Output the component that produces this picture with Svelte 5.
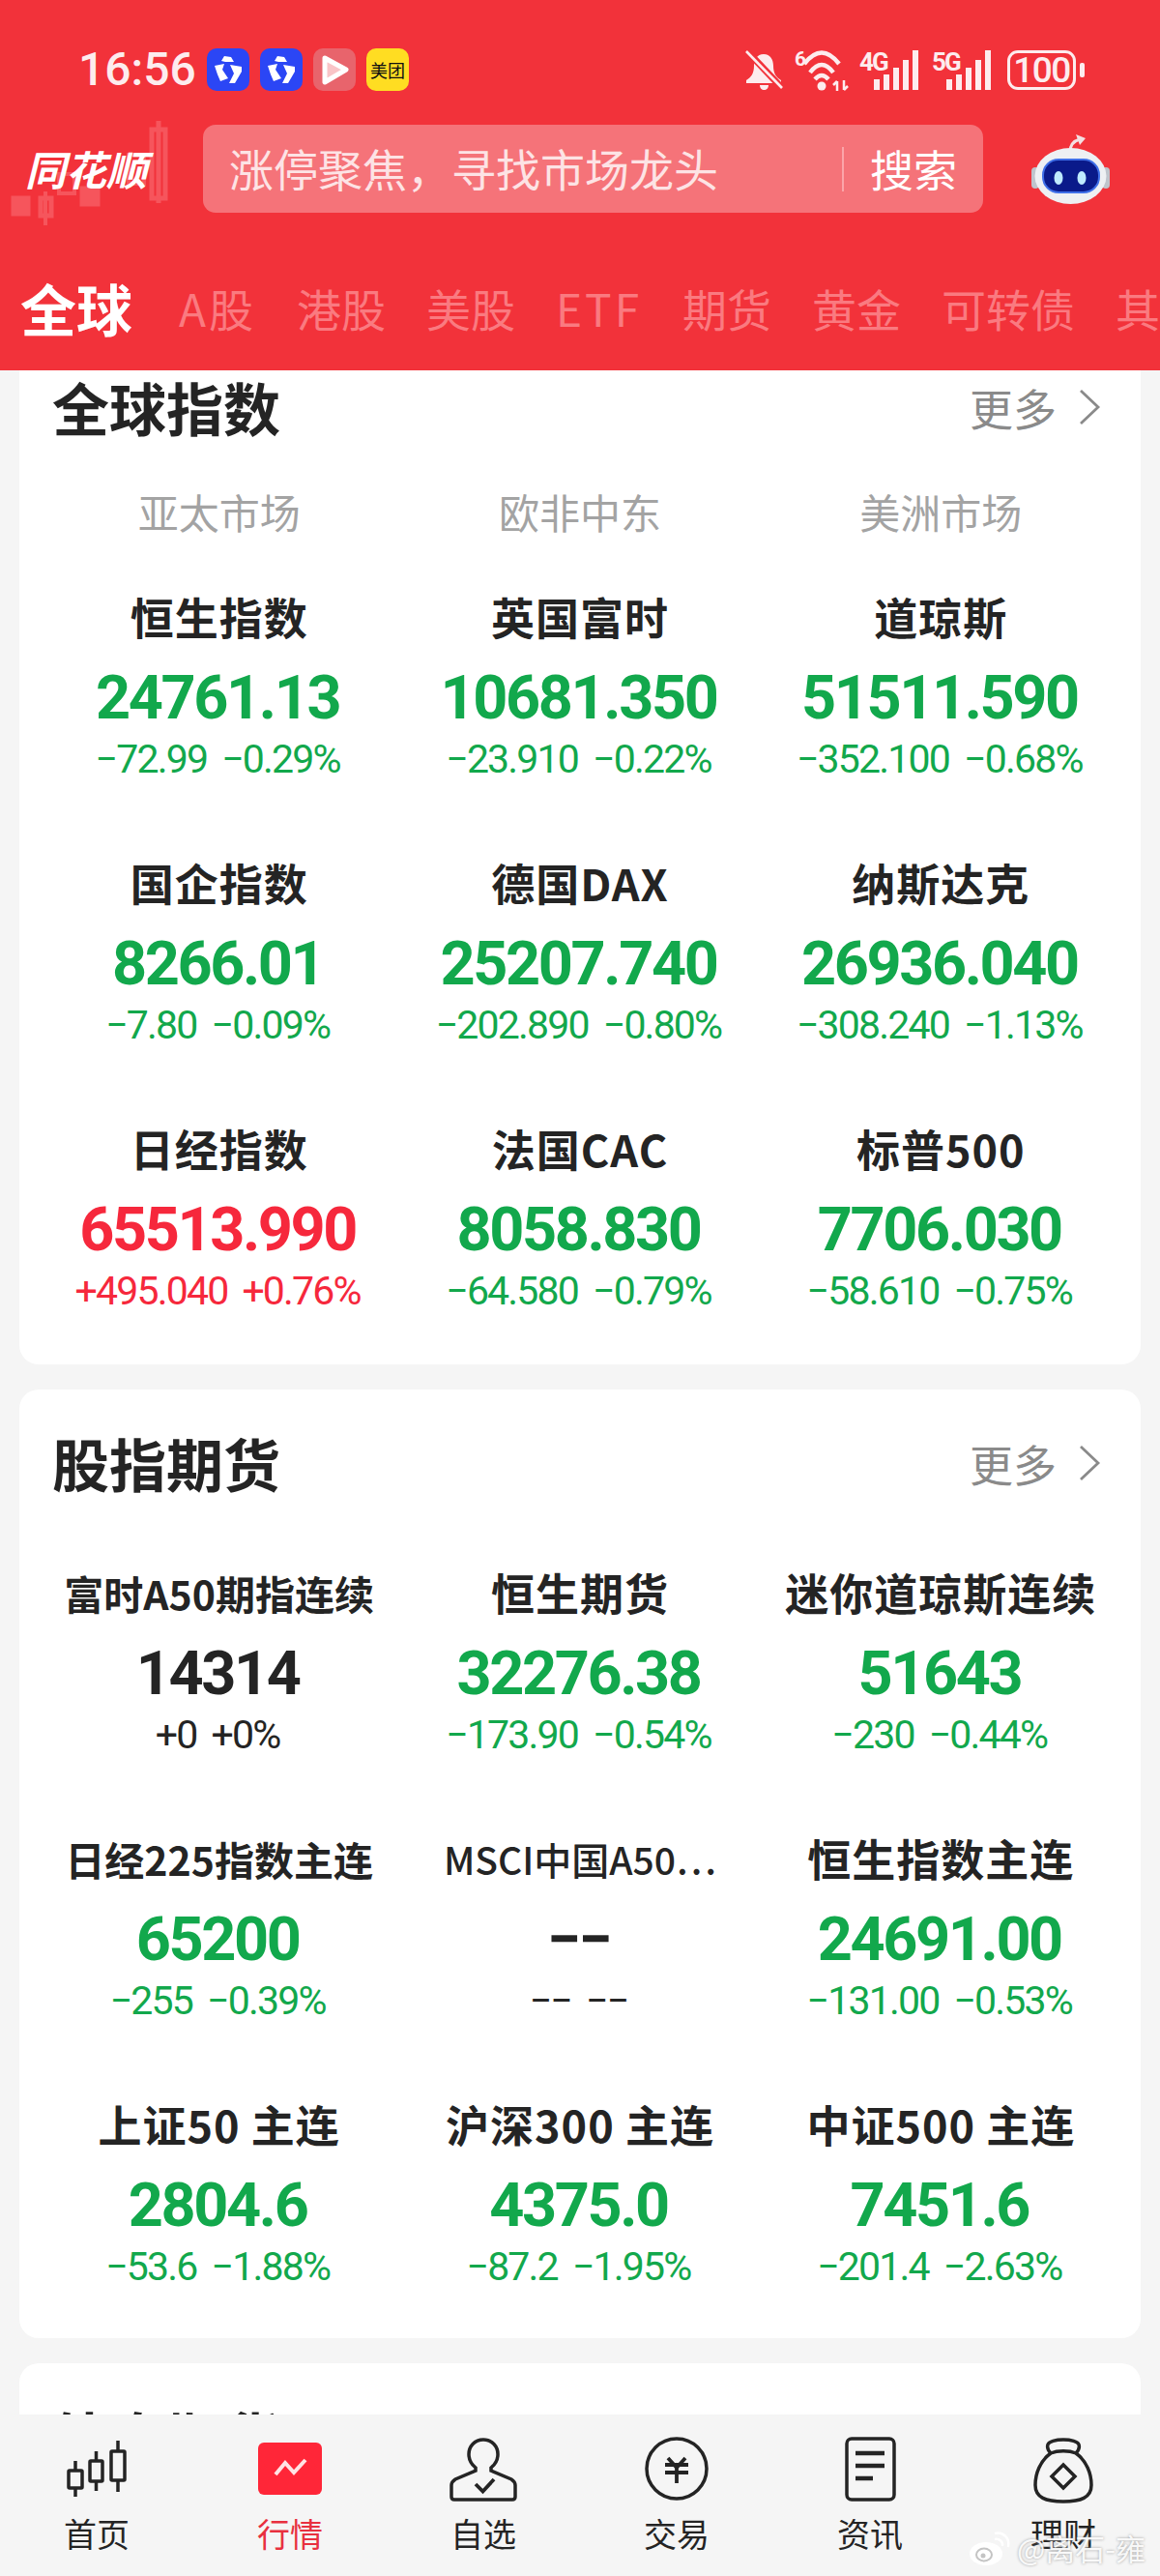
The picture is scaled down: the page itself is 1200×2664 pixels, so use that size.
<script>
  const tabs = ['A股', '港股', '美股', 'ETF', '期货', '黄金', '可转债', '其他']
  const markets = ['亚太市场', '欧非中东', '美洲市场']

  const indices = [
    { name: '恒生指数', value: '24761.13', change: '−72.99', pct: '−0.29%', dir: 'down' },
    { name: '英国富时', value: '10681.350', change: '−23.910', pct: '−0.22%', dir: 'down' },
    { name: '道琼斯', value: '51511.590', change: '−352.100', pct: '−0.68%', dir: 'down' },
    { name: '国企指数', value: '8266.01', change: '−7.80', pct: '−0.09%', dir: 'down' },
    { name: '德国DAX', value: '25207.740', change: '−202.890', pct: '−0.80%', dir: 'down' },
    { name: '纳斯达克', value: '26936.040', change: '−308.240', pct: '−1.13%', dir: 'down' },
    { name: '日经指数', value: '65513.990', change: '+495.040', pct: '+0.76%', dir: 'up' },
    { name: '法国CAC', value: '8058.830', change: '−64.580', pct: '−0.79%', dir: 'down' },
    { name: '标普500', value: '7706.030', change: '−58.610', pct: '−0.75%', dir: 'down' }
  ]

  const futures = [
    { name: '富时A50期指连续', value: '14314', change: '+0', pct: '+0%', dir: 'flat', fit: 'small' },
    { name: '恒生期货', value: '32276.38', change: '−173.90', pct: '−0.54%', dir: 'down' },
    { name: '迷你道琼斯连续', value: '51643', change: '−230', pct: '−0.44%', dir: 'down' },
    { name: '日经225指数主连', value: '65200', change: '−255', pct: '−0.39%', dir: 'down', fit: 'small' },
    { name: 'MSCI中国A50…', value: '−−', change: '−−', pct: '−−', dir: 'flat', fit: 'smaller' },
    { name: '恒生指数主连', value: '24691.00', change: '−131.00', pct: '−0.53%', dir: 'down' },
    { name: '上证50 主连', value: '2804.6', change: '−53.6', pct: '−1.88%', dir: 'down' },
    { name: '沪深300 主连', value: '4375.0', change: '−87.2', pct: '−1.95%', dir: 'down' },
    { name: '中证500 主连', value: '7451.6', change: '−201.4', pct: '−2.63%', dir: 'down' }
  ]

  const bars = [11, 16, 23, 31, 41]
</script>

{#snippet quote(q)}
  <div class="quote">
    <div class="name {q.fit ?? ''}">{q.name}</div>
    <div class="value {q.dir}">{q.value}</div>
    <div class="change {q.dir}"><span>{q.change}</span><span>{q.pct}</span></div>
  </div>
{/snippet}

{#snippet head(title)}
  <div class="card-head">
    <h2>{title}</h2>
    <div class="more">更多
      <svg width="24" height="40" viewBox="0 0 24 40"><path d="M3 3l18 17L3 37" fill="none" stroke="#8a8a8a" stroke-width="2.8"/></svg>
    </div>
  </div>
{/snippet}

{#snippet appIcon()}
  <svg class="app" viewBox="0 0 44 44">
    <rect width="44" height="44" rx="10" fill="#2b46f5"/>
    <polygon points="15,13 18,8 25,9 28,14 19,14" fill="#fff"/>
    <polygon points="8,18 18,16 16,22 22,31 14,34 11,27" fill="#fff"/>
    <polygon points="24,17 36,19 36,24 29,36 23,36 28,26" fill="#fff"/>
  </svg>
{/snippet}

{#snippet signal(gen)}
  <div class="signal">
    <span class="gen">{gen}</span>
    {#each bars as h}
      <i style="height:{h}px"></i>
    {/each}
  </div>
{/snippet}

<div class="page">
  <header>
    <div class="status">
      <span class="time">16:56</span>
      {@render appIcon()}
      {@render appIcon()}
      <svg class="app" viewBox="0 0 44 44">
        <rect width="44" height="44" rx="10" fill="#e8646c"/>
        <path d="M12 10l22 12-22 13z" fill="#f9c4c7" stroke="#fff" stroke-width="5" stroke-linejoin="round"/>
      </svg>
      <div class="meituan">美团</div>
      <div class="status-right">
        <svg width="39" height="43" viewBox="0 0 39 43">
          <path d="M19 5c-7 0-10 6-10 12 0 8-3 12-8 15v3h36v-3c-5-3-8-7-8-15 0-6-3-12-10-12zM15 37h9c0 3-2 5-4.500 5s-4.500-2-4.500-5z" fill="#fdecee"/>
          <path d="M2 2l36 38" stroke="#f2323a" stroke-width="7"/>
          <path d="M1 2l37 38" stroke="#fdecee" stroke-width="2.600"/>
        </svg>
        <svg class="wifi" width="57" height="43" viewBox="0 0 57 43">
          <text x="1" y="17" class="six">6</text>
          <path d="M11 15Q29-8 47 15M17 24Q29 8 41 24M22 31Q29 23 36 31" fill="none" stroke="#fdecee" stroke-width="4.500"/>
          <circle cx="29" cy="38" r="4.500" fill="#fdecee"/>
          <path d="M45 33v10M41 37l4-4M52 32v10M52 42l4-4" fill="none" stroke="#fdecee" stroke-width="2.500"/>
        </svg>
        {@render signal('4G')}
        {@render signal('5G')}
        <div class="battery">100</div>
      </div>
    </div>

    <div class="search-row">
      <div class="logo">
        <svg class="candles" width="180" height="145" viewBox="0 0 180 145">
          <g fill="#f6555c" stroke="#f6555c">
            <rect x="12" y="83" width="19" height="20"/>
            <rect x="42" y="85" width="11" height="18" fill="none" stroke-width="5"/>
            <path d="M47 78v35" stroke-width="4"/>
            <rect x="61" y="60" width="16" height="20" fill="none" stroke-width="4"/>
            <rect x="83" y="73" width="20" height="20"/>
            <rect x="133" y="40" width="16" height="30" fill="none" stroke-width="4"/>
            <rect x="157" y="14" width="14" height="71" fill="none" stroke-width="5"/>
            <path d="M164 5v85" stroke-width="5"/>
          </g>
        </svg>
        <span>同花顺</span>
      </div>
      <div class="search">
        <span class="hint">涨停聚焦，寻找市场龙头</span>
        <span class="go">搜索</span>
      </div>
      <svg class="robot" width="81" height="72" viewBox="0 0 81 72">
        <path d="M40 18c0-7 3-11 10-13" fill="none" stroke="#f3dfe2" stroke-width="3"/>
        <path d="M46 0l10 4-6 7z" fill="#f3dfe2"/>
        <rect x="0" y="34" width="8" height="22" rx="4" fill="#bfc4cc"/>
        <rect x="73" y="34" width="8" height="22" rx="4" fill="#bfc4cc"/>
        <ellipse cx="40.500" cy="43" rx="37" ry="29" fill="#eef0f3"/>
        <rect x="12" y="26" width="58" height="34" rx="16" fill="#0a1a8a" stroke="#3f6fe8" stroke-width="2"/>
        <ellipse cx="28" cy="45" rx="4.500" ry="7" fill="#bfeaff"/>
        <ellipse cx="52" cy="45" rx="4.500" ry="7" fill="#bfeaff"/>
      </svg>
    </div>

    <nav class="tabs">
      <span class="on">全球</span>
      {#each tabs as t}
        <span class:latin={/[A-Z]/.test(t)}>{t}</span>
      {/each}
    </nav>
  </header>

  <main>
    <section class="card first">
      {@render head('全球指数')}
      <div class="grid markets">
        {#each markets as m}
          <div>{m}</div>
        {/each}
      </div>
      <div class="grid">
        {#each indices as q}
          {@render quote(q)}
        {/each}
      </div>
    </section>

    <section class="card second">
      {@render head('股指期货')}
      <div class="grid">
        {#each futures as q}
          {@render quote(q)}
        {/each}
      </div>
    </section>

    <section class="card third">
      {@render head('外盘期货')}
    </section>
  </main>

  <footer>
    <div class="nav">
      <svg viewBox="0 0 80 70"><g fill="none" stroke="#242424" stroke-width="3.500"><rect x="11" y="35" width="14" height="18" rx="1"/><path d="M18 25v10M18 53v9"/><rect x="33" y="25" width="13" height="21" rx="1"/><path d="M39.500 15v10M39.500 46v10"/><rect x="55" y="15" width="14" height="30" rx="1"/><path d="M62 4v11M62 45v12"/></g></svg>
      <span>首页</span>
    </div>
    <div class="nav active">
      <svg viewBox="0 0 80 70"><rect x="7" y="6" width="66" height="54" rx="6" fill="#ff2638"/><path d="M25 39l10-12 9 10 12-13" fill="none" stroke="#ffe3e4" stroke-width="4"/></svg>
      <span>行情</span>
    </div>
    <div class="nav">
      <svg viewBox="0 0 80 70"><path d="M40 3c-9 0-15 7-15 15 0 6 2 10 7 14v3L11 44c-3 2-4 3-4 6v12c0 2 1 3 3 3h60c2 0 3-1 3-3V50c0-3-1-4-4-6L48 35v-3c5-4 7-8 7-14 0-8-6-15-15-15z" fill="none" stroke="#242424" stroke-width="3.500"/><path d="M32 49l7.500 7.500L51 44" fill="none" stroke="#242424" stroke-width="3.800"/></svg>
      <span>自选</span>
    </div>
    <div class="nav">
      <svg viewBox="0 0 80 70"><circle cx="40" cy="33" r="31" fill="none" stroke="#242424" stroke-width="3.500"/><path d="M31 22l9 10 9-10M28 29h24M28 37h24M40 30v18" fill="none" stroke="#242424" stroke-width="3.800"/></svg>
      <span>交易</span>
    </div>
    <div class="nav">
      <svg viewBox="0 0 80 70"><rect x="16" y="2" width="49" height="63" rx="5" fill="none" stroke="#242424" stroke-width="3.500"/><path d="M25 17h30M25 30h30M25 43h18" stroke="#242424" stroke-width="4.500"/></svg>
      <span>资讯</span>
    </div>
    <div class="nav">
      <svg viewBox="0 0 80 70"><path d="M27 17c-3-3-4-6-3-9 1-3 8-5 16-5s15 2 16 5c1 3 0 6-3 9M27 17C16 25 11 38 11 50c0 13 11 17 29 17s29-4 29-17c0-12-5-25-16-33-7-3-19-3-26 0z" fill="none" stroke="#242424" stroke-width="3.500"/><path d="M40 29l12 12-12 12-12-12z" fill="none" stroke="#242424" stroke-width="3.500"/></svg>
      <span>理财</span>
    </div>
    <div class="mark">
      <svg width="44" height="36" viewBox="0 0 44 36"><ellipse cx="18" cy="24" rx="17" ry="12" fill="#fff"/><ellipse cx="16" cy="25" rx="8" ry="6.500" fill="none" stroke="#c4c4c4" stroke-width="2"/><circle cx="15" cy="26" r="2.500" fill="#c4c4c4"/><path d="M27 3c8-2 16 4 14 14M27 9c4-1 9 2 8 7" fill="none" stroke="#fff" stroke-width="2.500"/></svg>
      <span>@离石-雍</span>
    </div>
  </footer>
</div>

<style>
  :global(body) {
    margin: 0;
    background: #f5f5f5;
  }
  .page {
    width: 1200px;
    height: 2664px;
    display: flex;
    flex-direction: column;
    overflow: hidden;
    font-family: "Noto Sans CJK SC", "Noto Sans", sans-serif;
    color: #242424;
  }

  header {
    height: 383px;
    flex: none;
    background: #f2323a;
    box-sizing: border-box;
    padding-top: 50px;
    overflow: hidden;
  }
  .status {
    display: flex;
    align-items: center;
    height: 44px;
    padding-left: 81px;
  }
  .time {
    width: 133px;
    font: 500 48px/44px Roboto, sans-serif;
    color: #fdecee;
  }
  .app {
    width: 44px;
    height: 44px;
    margin-right: 11px;
  }
  .meituan {
    width: 44px;
    height: 44px;
    border-radius: 10px;
    background: #ffdd22;
    color: #111;
    font-size: 18px;
    line-height: 44px;
    text-align: center;
    white-space: nowrap;
  }
  .status-right {
    margin-left: auto;
    margin-right: 87px;
    display: flex;
    align-items: center;
    gap: 11px;
  }
  .wifi {
    overflow: visible;
  }
  .six {
    font: 700 21px Roboto, sans-serif;
    fill: #fdecee;
  }
  .signal {
    position: relative;
    display: flex;
    align-items: flex-end;
    justify-content: flex-end;
    gap: 4px;
    width: 61px;
    height: 42px;
    margin-right: 3px;
  }
  .signal i {
    width: 6px;
    background: #fdecee;
  }
  .gen {
    position: absolute;
    left: 0;
    top: 0;
    font: 700 26px/26px Roboto, sans-serif;
    letter-spacing: -2px;
    color: #fdecee;
  }
  .battery {
    position: relative;
    width: 71px;
    height: 41px;
    box-sizing: border-box;
    margin-left: 3px;
    border: 3px solid #fdecee;
    border-radius: 11px;
    text-align: center;
    font: 500 37px/35px Roboto, sans-serif;
    letter-spacing: -1.500px;
    color: #fdecee;
  }
  .battery::after {
    content: "";
    position: absolute;
    right: -12px;
    top: 10px;
    width: 5px;
    height: 15px;
    border-radius: 2px;
    background: #fdecee;
  }

  .search-row {
    display: flex;
    align-items: center;
    height: 91px;
    margin-top: 35px;
  }
  .logo {
    position: relative;
    width: 210px;
    height: 91px;
    flex: none;
  }
  .candles {
    position: absolute;
    left: 0;
    top: -9px;
  }
  .logo span {
    position: absolute;
    left: 26px;
    top: 20px;
    font-size: 42px;
    line-height: 50px;
    font-weight: 700;
    font-style: italic;
    color: #fff;
    white-space: nowrap;
  }
  .search {
    width: 807px;
    height: 91px;
    flex: none;
    box-sizing: border-box;
    border-radius: 13px;
    background: #f57379;
    display: flex;
    align-items: center;
    padding: 0 27px 0 27px;
  }
  .hint {
    color: #fde3e5;
    flex: 1;
    font-size: 46px;
    padding-bottom: 3px;
  }
  .go {
    color: #fff;
    border-left: 2px solid #fba5a9;
    padding-left: 27px;
    font-size: 45px;
    line-height: 46px;
  }
  .robot {
    margin-left: 50px;
    flex: none;
  }

  .tabs {
    display: flex;
    align-items: center;
    gap: 42px;
    height: 70px;
    margin-top: 63px;
    padding-left: 21px;
    white-space: nowrap;
    font-size: 46px;
    color: #fa7a80;
  }
  .tabs .on {
    font-size: 58px;
    font-weight: 700;
    color: #fff;
    margin-right: 6px;
  }
  .tabs .latin {
    letter-spacing: 3px;
  }

  main {
    flex: 1;
    min-height: 0;
    overflow: hidden;
    padding: 0 20px;
  }
  .card {
    background: #fff;
    border-radius: 20px;
    margin-bottom: 26px;
    padding: 0 20px 50px;
  }
  .card.first {
    border-radius: 0 0 20px 20px;
    padding-bottom: 52px;
  }
  .card-head {
    display: flex;
    align-items: center;
    justify-content: space-between;
    height: 152px;
    padding: 0 21px 0 14px;
  }
  .first .card-head {
    height: 76px;
  }
  h2 {
    margin: 0;
    font-size: 59px;
    font-weight: 700;
    line-height: 70px;
  }
  .more {
    display: flex;
    align-items: center;
    gap: 22px;
    font-size: 45px;
    color: #8a8a8a;
  }
  .grid {
    display: grid;
    grid-template-columns: repeat(3, 1fr);
    row-gap: 74px;
    text-align: center;
  }
  .markets {
    margin-top: 45px;
    margin-bottom: 54px;
    font-size: 42px;
    line-height: 50px;
    color: #a3a3a3;
  }
  .second .grid {
    margin-top: 28px;
  }
  .quote {
    height: 201px;
  }
  .name {
    font-size: 45px;
    letter-spacing: 1px;
    line-height: 60px;
    font-weight: 700;
    white-space: nowrap;
  }
  .name.small {
    font-size: 41px;
    letter-spacing: 0;
  }
  .name.smaller {
    font-size: 39px;
    letter-spacing: 0;
    font-weight: 500;
  }
  .value {
    margin: 18px 0 0 -3px;
    font: 700 63px/72px Roboto, sans-serif;
    letter-spacing: -2.400px;
  }
  .change {
    margin: 5px 0 0 -3px;
    display: flex;
    justify-content: center;
    gap: 15px;
    font: 400 41px/44px Roboto, sans-serif;
    letter-spacing: -1.800px;
  }
  .down {
    color: #12a84c;
  }
  .up {
    color: #f6283c;
  }
  .flat {
    color: #242424;
  }

  footer {
    position: relative;
    height: 167px;
    flex: none;
    box-sizing: border-box;
    background: #f5f5f5;
    display: grid;
    grid-template-columns: repeat(6, 1fr);
    padding-top: 23px;
  }
  .nav {
    display: flex;
    flex-direction: column;
    align-items: center;
    font-size: 34px;
    line-height: 44px;
  }
  .nav svg {
    width: 80px;
    height: 70px;
    margin-bottom: 8px;
  }
  .nav.active {
    color: #e8303f;
  }
  .mark {
    position: absolute;
    left: 1002px;
    top: 118px;
    display: flex;
    align-items: center;
    gap: 6px;
    font-size: 31px;
    line-height: 40px;
    color: rgba(255, 255, 255, 0.92);
    white-space: nowrap;
    text-shadow: 0 0 3px #999;
  }
</style>
